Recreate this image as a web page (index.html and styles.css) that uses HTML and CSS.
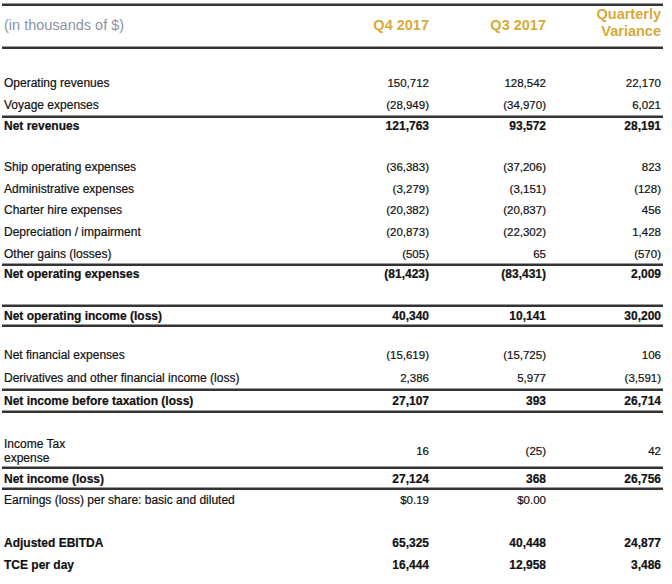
FILE: index.html
```html
<!DOCTYPE html>
<html>
<head>
<meta charset="utf-8">
<link rel="stylesheet" href="styles.css">
</head>
<body>
<div class="sheet">
  <div class="rule"></div>
  <div class="row head">
    <div class="c lab units">(in thousands of $)</div>
    <div class="c num hq">Q4 2017</div>
    <div class="c num hq">Q3 2017</div>
    <div class="c num hv">Quarterly<br>Variance</div>
  </div>
  <div class="rule"></div>
  <div class="gap g23"></div>

  <div class="row r22"><div class="c lab">Operating revenues</div><div class="c num">150,712</div><div class="c num">128,542</div><div class="c num">22,170</div></div>
  <div class="row r22"><div class="c lab">Voyage expenses</div><div class="c num">(28,949)</div><div class="c num">(34,970)</div><div class="c num">6,021</div></div>
  <div class="rule"></div>
  <div class="row r15 b"><div class="c lab">Net revenues</div><div class="c num">121,763</div><div class="c num">93,572</div><div class="c num">28,191</div></div>
  <div class="gap g23"></div>

  <div class="row r22"><div class="c lab">Ship operating expenses</div><div class="c num">(36,383)</div><div class="c num">(37,206)</div><div class="c num">823</div></div>
  <div class="row r21"><div class="c lab">Administrative expenses</div><div class="c num">(3,279)</div><div class="c num">(3,151)</div><div class="c num">(128)</div></div>
  <div class="row r22"><div class="c lab">Charter hire expenses</div><div class="c num">(20,382)</div><div class="c num">(20,837)</div><div class="c num">456</div></div>
  <div class="row r22"><div class="c lab">Depreciation / impairment</div><div class="c num">(20,873)</div><div class="c num">(22,302)</div><div class="c num">1,428</div></div>
  <div class="row r21"><div class="c lab">Other gains (losses)</div><div class="c num">(505)</div><div class="c num">65</div><div class="c num">(570)</div></div>
  <div class="rule"></div>
  <div class="row r16 b"><div class="c lab">Net operating expenses</div><div class="c num">(81,423)</div><div class="c num">(83,431)</div><div class="c num">2,009</div></div>
  <div class="gap g23"></div>

  <div class="rule"></div>
  <div class="row r18 b"><div class="c lab">Net operating income (loss)</div><div class="c num">40,340</div><div class="c num">10,141</div><div class="c num">30,200</div></div>
  <div class="rule"></div>
  <div class="gap g17"></div>

  <div class="row r22"><div class="c lab">Net financial expenses</div><div class="c num">(15,619)</div><div class="c num">(15,725)</div><div class="c num">106</div></div>
  <div class="row r23"><div class="c lab">Derivatives and other financial income (loss)</div><div class="c num">2,386</div><div class="c num">5,977</div><div class="c num">(3,591)</div></div>
  <div class="rule"></div>
  <div class="row r20 b"><div class="c lab">Net income before taxation (loss)</div><div class="c num">27,107</div><div class="c num">393</div><div class="c num">26,714</div></div>
  <div class="rule"></div>
  <div class="gap g21"></div>

  <div class="row r33"><div class="c lab two">Income Tax<br>expense</div><div class="c num">16</div><div class="c num">(25)</div><div class="c num">42</div></div>
  <div class="rule"></div>
  <div class="row r19 b"><div class="c lab">Net income (loss)</div><div class="c num">27,124</div><div class="c num">368</div><div class="c num">26,756</div></div>
  <div class="rule"></div>
  <div class="row r19"><div class="c lab">Earnings (loss) per share: basic and diluted</div><div class="c num">$0.19</div><div class="c num">$0.00</div><div class="c num"></div></div>
  <div class="gap g23"></div>

  <div class="row r22 b"><div class="c lab">Adjusted EBITDA</div><div class="c num">65,325</div><div class="c num">40,448</div><div class="c num">24,877</div></div>
  <div class="row r22 b"><div class="c lab">TCE per day</div><div class="c num">16,444</div><div class="c num">12,958</div><div class="c num">3,486</div></div>
</div>
</body>
</html>
```
FILE: styles.css
```css
html, body {
  margin: 0;
  padding: 0;
  background: #ffffff;
}
body {
  font-family: "Liberation Sans", Arial, sans-serif;
  color: #111111;
}
.sheet {
  width: 661px;
  margin: 4px 0 0 2px;
}
.rule {
  height: 2px;
  background: #333333;
  box-shadow: 0 -1px 0 #9a9a9a;
}
.row {
  display: grid;
  grid-template-columns: 327px 100px 117px 115px;
  padding-right: 2px;
  align-items: center;
}
.c {
  font-size: 12px;
  white-space: nowrap;
  -webkit-text-stroke: 0.2px currentColor;
}
.lab {
  padding-left: 2px;
}
.num {
  text-align: right;
  font-size: 11.5px;
}
.b .c {
  font-weight: bold;
  font-size: 12px;
}
.head {
  height: 41px;
  align-items: start;
}
.head .c {
  line-height: 17px;
  font-size: 14.5px;
  -webkit-text-stroke: 0;
}
.units {
  padding-top: 11px;
  color: #8b93a3;
  font-size: 15px;
}
.head .hq {
  padding-top: 11px;
  color: #d6aa38;
  font-weight: bold;
}
.head .hv {
  color: #d6aa38;
  font-weight: bold;
}
.two {
  line-height: 14px;
}
.gap.g17 { height: 17px; }
.gap.g21 { height: 21px; }
.gap.g23 { height: 23px; }
.r15 { height: 15px; }
.r16 { height: 16px; }
.r18 { height: 18px; }
.r19 { height: 19px; }
.r20 { height: 20px; }
.r21 { height: 21px; }
.r22 { height: 22px; }
.r23 { height: 23px; }
.r33 { height: 33px; }
```
